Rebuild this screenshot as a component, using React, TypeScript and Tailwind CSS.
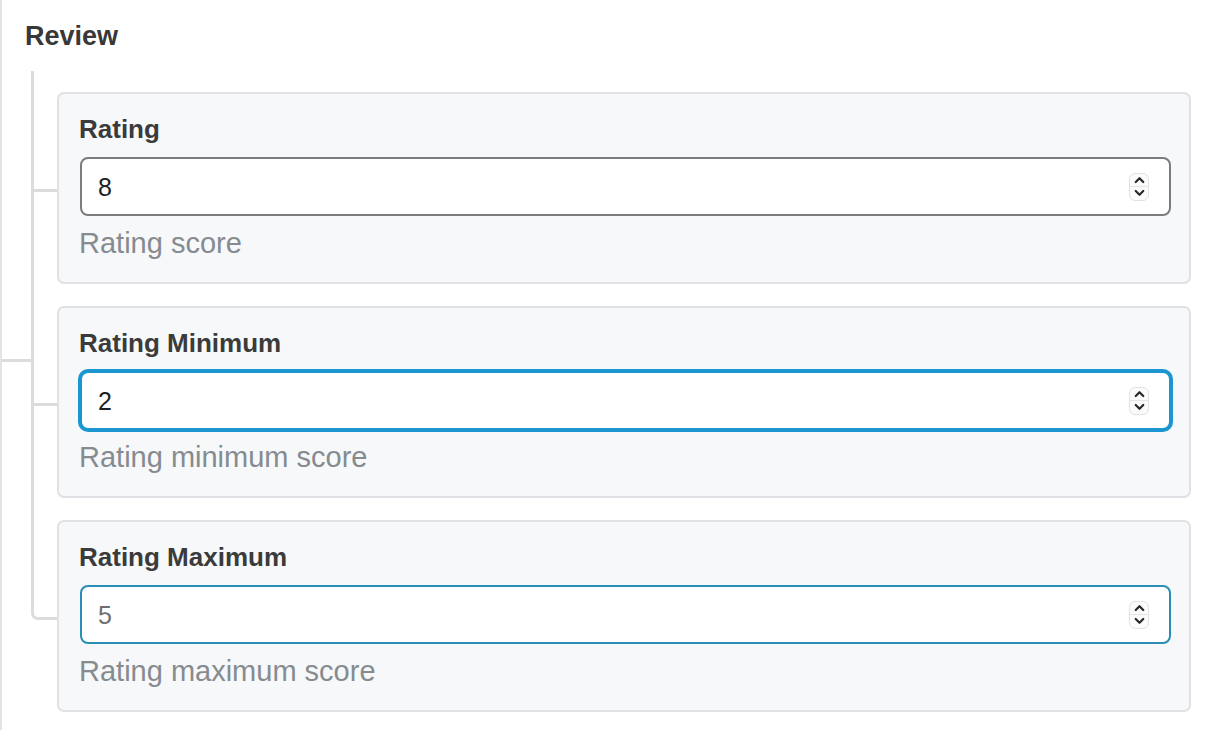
import React from "react";

const Spinner = () => (
  <div className="flex h-[28px] w-[20px] flex-col overflow-hidden rounded-[6px] border border-[#e2e2e2] bg-[#fbfbfb]">
    <div className="flex flex-1 items-center justify-center border-b border-[#e6e6e6]">
      <svg width="11" height="8" viewBox="0 0 11 8" fill="none">
        <path d="M1.75 6 L5.5 2.25 L9.25 6" stroke="#2a2a2a" strokeWidth="2.2" strokeLinecap="round" strokeLinejoin="round" />
      </svg>
    </div>
    <div className="flex flex-1 items-center justify-center">
      <svg width="11" height="8" viewBox="0 0 11 8" fill="none">
        <path d="M1.75 2 L5.5 5.75 L9.25 2" stroke="#2a2a2a" strokeWidth="2.2" strokeLinecap="round" strokeLinejoin="round" />
      </svg>
    </div>
  </div>
);

type FieldProps = {
  label: string;
  value: string;
  help: string;
  variant: "default" | "focus" | "hover";
};

const Field = ({ label, value, help, variant }: FieldProps) => {
  const inputCls =
    variant === "default"
      ? "border-[#7c7c7c]"
      : variant === "focus"
      ? "border-[#1b96d1] ring-2 ring-[#1b96d1]"
      : "border-[#2a8db6]";
  return (
    <div className="h-[192px] rounded-[7px] border-2 border-[#dfe1e4] bg-[#f6f8fa] pl-[21px] pr-[18px] pt-[20px]">
      <div className="-ml-[1px] text-[26px] font-bold leading-[31px] text-[#3b3b3b]">{label}</div>
      <div
        className={`mt-[12px] flex h-[59px] items-center justify-between rounded-[8px] border-2 bg-white pl-[16px] pr-[20px] ${inputCls}`}
      >
        <span className={`text-[25px] leading-[30px] ${variant === "hover" ? "text-[#6e6e6e]" : "text-[#1f1f1f]"}`}>
          {value}
        </span>
        <Spinner />
      </div>
      <div className="-ml-[1px] mt-[10px] text-[29px] leading-[34px] text-[#868b90]">{help}</div>
    </div>
  );
};

export default function App() {
  const line = "border-[#dcdcdc]";
  return (
    <div
      className="h-[730px] w-[1222px] overflow-hidden border-l-2 border-[#e3e3e3] bg-white pr-[31px]"
      style={{ fontFamily: '"Liberation Sans", Arial, sans-serif' }}
    >
      <div className="pl-[23px] pt-[20px] text-[27px] font-bold leading-[32px] text-[#383838]">Review</div>
      <div className="mt-[19px] flex">
        {/* branch from parent line */}
        <div className="flex w-[29px] flex-col">
          <div className="h-[288px]" />
          <div className="h-[3px] bg-[#dcdcdc]" />
        </div>
        <div className="flex flex-1 flex-col">
          <div className={`h-[21px] border-l-[3px] ${line}`} />
          {/* row 1 */}
          <div className="flex">
            <div className="flex w-[26px] flex-col">
              <div className={`h-[97px] border-l-[3px] ${line}`} />
              <div className="h-[3px] bg-[#dcdcdc]" />
              <div className={`flex-1 border-l-[3px] ${line}`} />
            </div>
            <div className="flex-1 pb-[22px]">
              <Field label="Rating" value="8" help="Rating score" variant="default" />
            </div>
          </div>
          {/* row 2 */}
          <div className="flex">
            <div className="flex w-[26px] flex-col">
              <div className={`h-[97px] border-l-[3px] ${line}`} />
              <div className="h-[3px] bg-[#dcdcdc]" />
              <div className={`flex-1 border-l-[3px] ${line}`} />
            </div>
            <div className="flex-1 pb-[22px]">
              <Field label="Rating Minimum" value="2" help="Rating minimum score" variant="focus" />
            </div>
          </div>
          {/* row 3 */}
          <div className="flex">
            <div className="flex w-[26px] flex-col">
              <div className={`h-[100px] rounded-bl-[7px] border-b-[3px] border-l-[3px] ${line}`} />
            </div>
            <div className="flex-1">
              <Field label="Rating Maximum" value="5" help="Rating maximum score" variant="hover" />
            </div>
          </div>
        </div>
      </div>
    </div>
  );
}
